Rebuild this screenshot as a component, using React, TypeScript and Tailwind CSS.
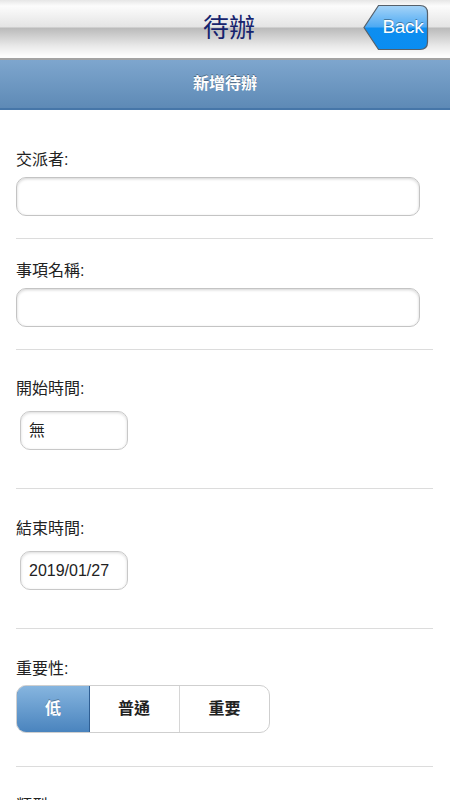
import React from "react";

const font = { fontFamily: '"Liberation Sans", "Noto Sans CJK TC", sans-serif' };

function Label({ children }: { children: React.ReactNode }) {
    return <div className="text-[16px] leading-[24px] text-[#222]">{children}</div>;
}

function Divider() {
    return <div className="h-px w-[417px] bg-[#dcdcdc]" />;
}

function TextInput() {
    return (
        <div className="h-[39px] w-[404px] rounded-[10px] border border-[#c4c4c4] bg-white shadow-[inset_0_1px_3px_rgba(0,0,0,0.18)]" />
    );
}

function DateBox({ value }: { value: string }) {
    return (
        <div className="ml-1 flex h-[39px] w-[108px] items-center rounded-[10px] border border-[#c8c8c8] bg-white pl-2 text-[16px] text-[#222] shadow-[inset_0_1px_3px_rgba(0,0,0,0.15)]">
            {value}
        </div>
    );
}

function BackButton() {
    return (
        <div className="relative h-[47px] w-[66px]">
            <svg width="66" height="47" viewBox="0 0 66 47" className="absolute inset-0">
                <defs>
                    <linearGradient id="bk" x1="0" y1="0" x2="0" y2="1">
                        <stop offset="0" stopColor="#a6d4f8" />
                        <stop offset="0.48" stopColor="#4eaaf3" />
                        <stop offset="0.52" stopColor="#0d8ef0" />
                        <stop offset="1" stopColor="#0a8df2" />
                    </linearGradient>
                </defs>
                <path d="M15.5 1.5 L57 1.5 Q64.5 1.5 64.5 9 L64.5 38 Q64.5 45.5 57 45.5 L15.5 45.5 L1 23.5 Z" fill="url(#bk)" stroke="#56606a" strokeWidth="1.2" />
            </svg>
            <span className="absolute left-[14px] right-0 top-0 flex h-[47px] items-center justify-center text-[19px] tracking-[-0.3px] text-white [text-shadow:0_-1px_0_rgba(0,0,0,0.35)]">
                Back
            </span>
        </div>
    );
}

export default function App() {
    return (
        <div className="min-h-[800px] w-[450px] overflow-hidden bg-white" style={font}>
            {/* top nav bar */}
            <div className="relative flex h-[60px] items-center justify-center border-b-2 border-[#a3a3a3] bg-[linear-gradient(to_bottom,#e6e6e6_0px,#fcfcfc_6px,#e4e4e4_27px,#bababa_28px,#e9e9e9_46px,#fdfdfd_56px)]">
                <span className="pb-[1px] pl-[8px] text-[26px] text-[#16246e]">待辦</span>
                <div className="absolute right-[21px] top-[4px]">
                    <BackButton />
                </div>
            </div>

            {/* sub header */}
            <div className="flex h-[50px] items-center justify-center border-b-2 border-[#4676a8] bg-[linear-gradient(to_bottom,#7ea6ce,#5e8ab6)]">
                <span className="text-[16px] font-bold text-white [text-shadow:0_-1px_0_rgba(0,0,0,0.35)]">新增待辦</span>
            </div>

            <div className="px-4">
                {/* 交派者 */}
                <div className="pt-[38px]">
                    <Label>交派者:</Label>
                    <div className="mt-[5px] mb-[22px]">
                        <TextInput />
                    </div>
                    <Divider />
                </div>

                {/* 事項名稱 */}
                <div className="pt-[20px]">
                    <Label>事項名稱:</Label>
                    <div className="mt-[5px] mb-[22px]">
                        <TextInput />
                    </div>
                    <Divider />
                </div>

                {/* 開始時間 */}
                <div className="pt-[27px]">
                    <Label>開始時間:</Label>
                    <div className="mt-[10px] mb-[38px]">
                        <DateBox value="無" />
                    </div>
                    <Divider />
                </div>

                {/* 結束時間 */}
                <div className="pt-[28px]">
                    <Label>結束時間:</Label>
                    <div className="mt-[10px] mb-[38px]">
                        <DateBox value="2019/01/27" />
                    </div>
                    <Divider />
                </div>

                {/* 重要性 */}
                <div className="pt-[28px]">
                    <Label>重要性:</Label>
                    <div className="mt-[4px] mb-[33px] flex h-[48px] w-[254px] overflow-hidden rounded-[10px] border border-[#cfcfcf] text-[16px] font-bold">
                        <div className="-m-px flex w-[74px] items-center justify-center rounded-l-[10px] border border-[#2f5f94] bg-[linear-gradient(to_bottom,#86b5df,#4a84be)] text-white [text-shadow:0_-1px_0_rgba(0,0,0,0.3)]">
                            低
                        </div>
                        <div className="flex w-[91px] items-center justify-center border-r border-[#d6d6d6] text-[#222]">普通</div>
                        <div className="flex flex-1 items-center justify-center text-[#222]">重要</div>
                    </div>
                    <Divider />
                </div>

                {/* 類型 */}
                <div className="pt-[27px]">
                    <Label>類型:</Label>
                </div>
            </div>
        </div>
    );
}
